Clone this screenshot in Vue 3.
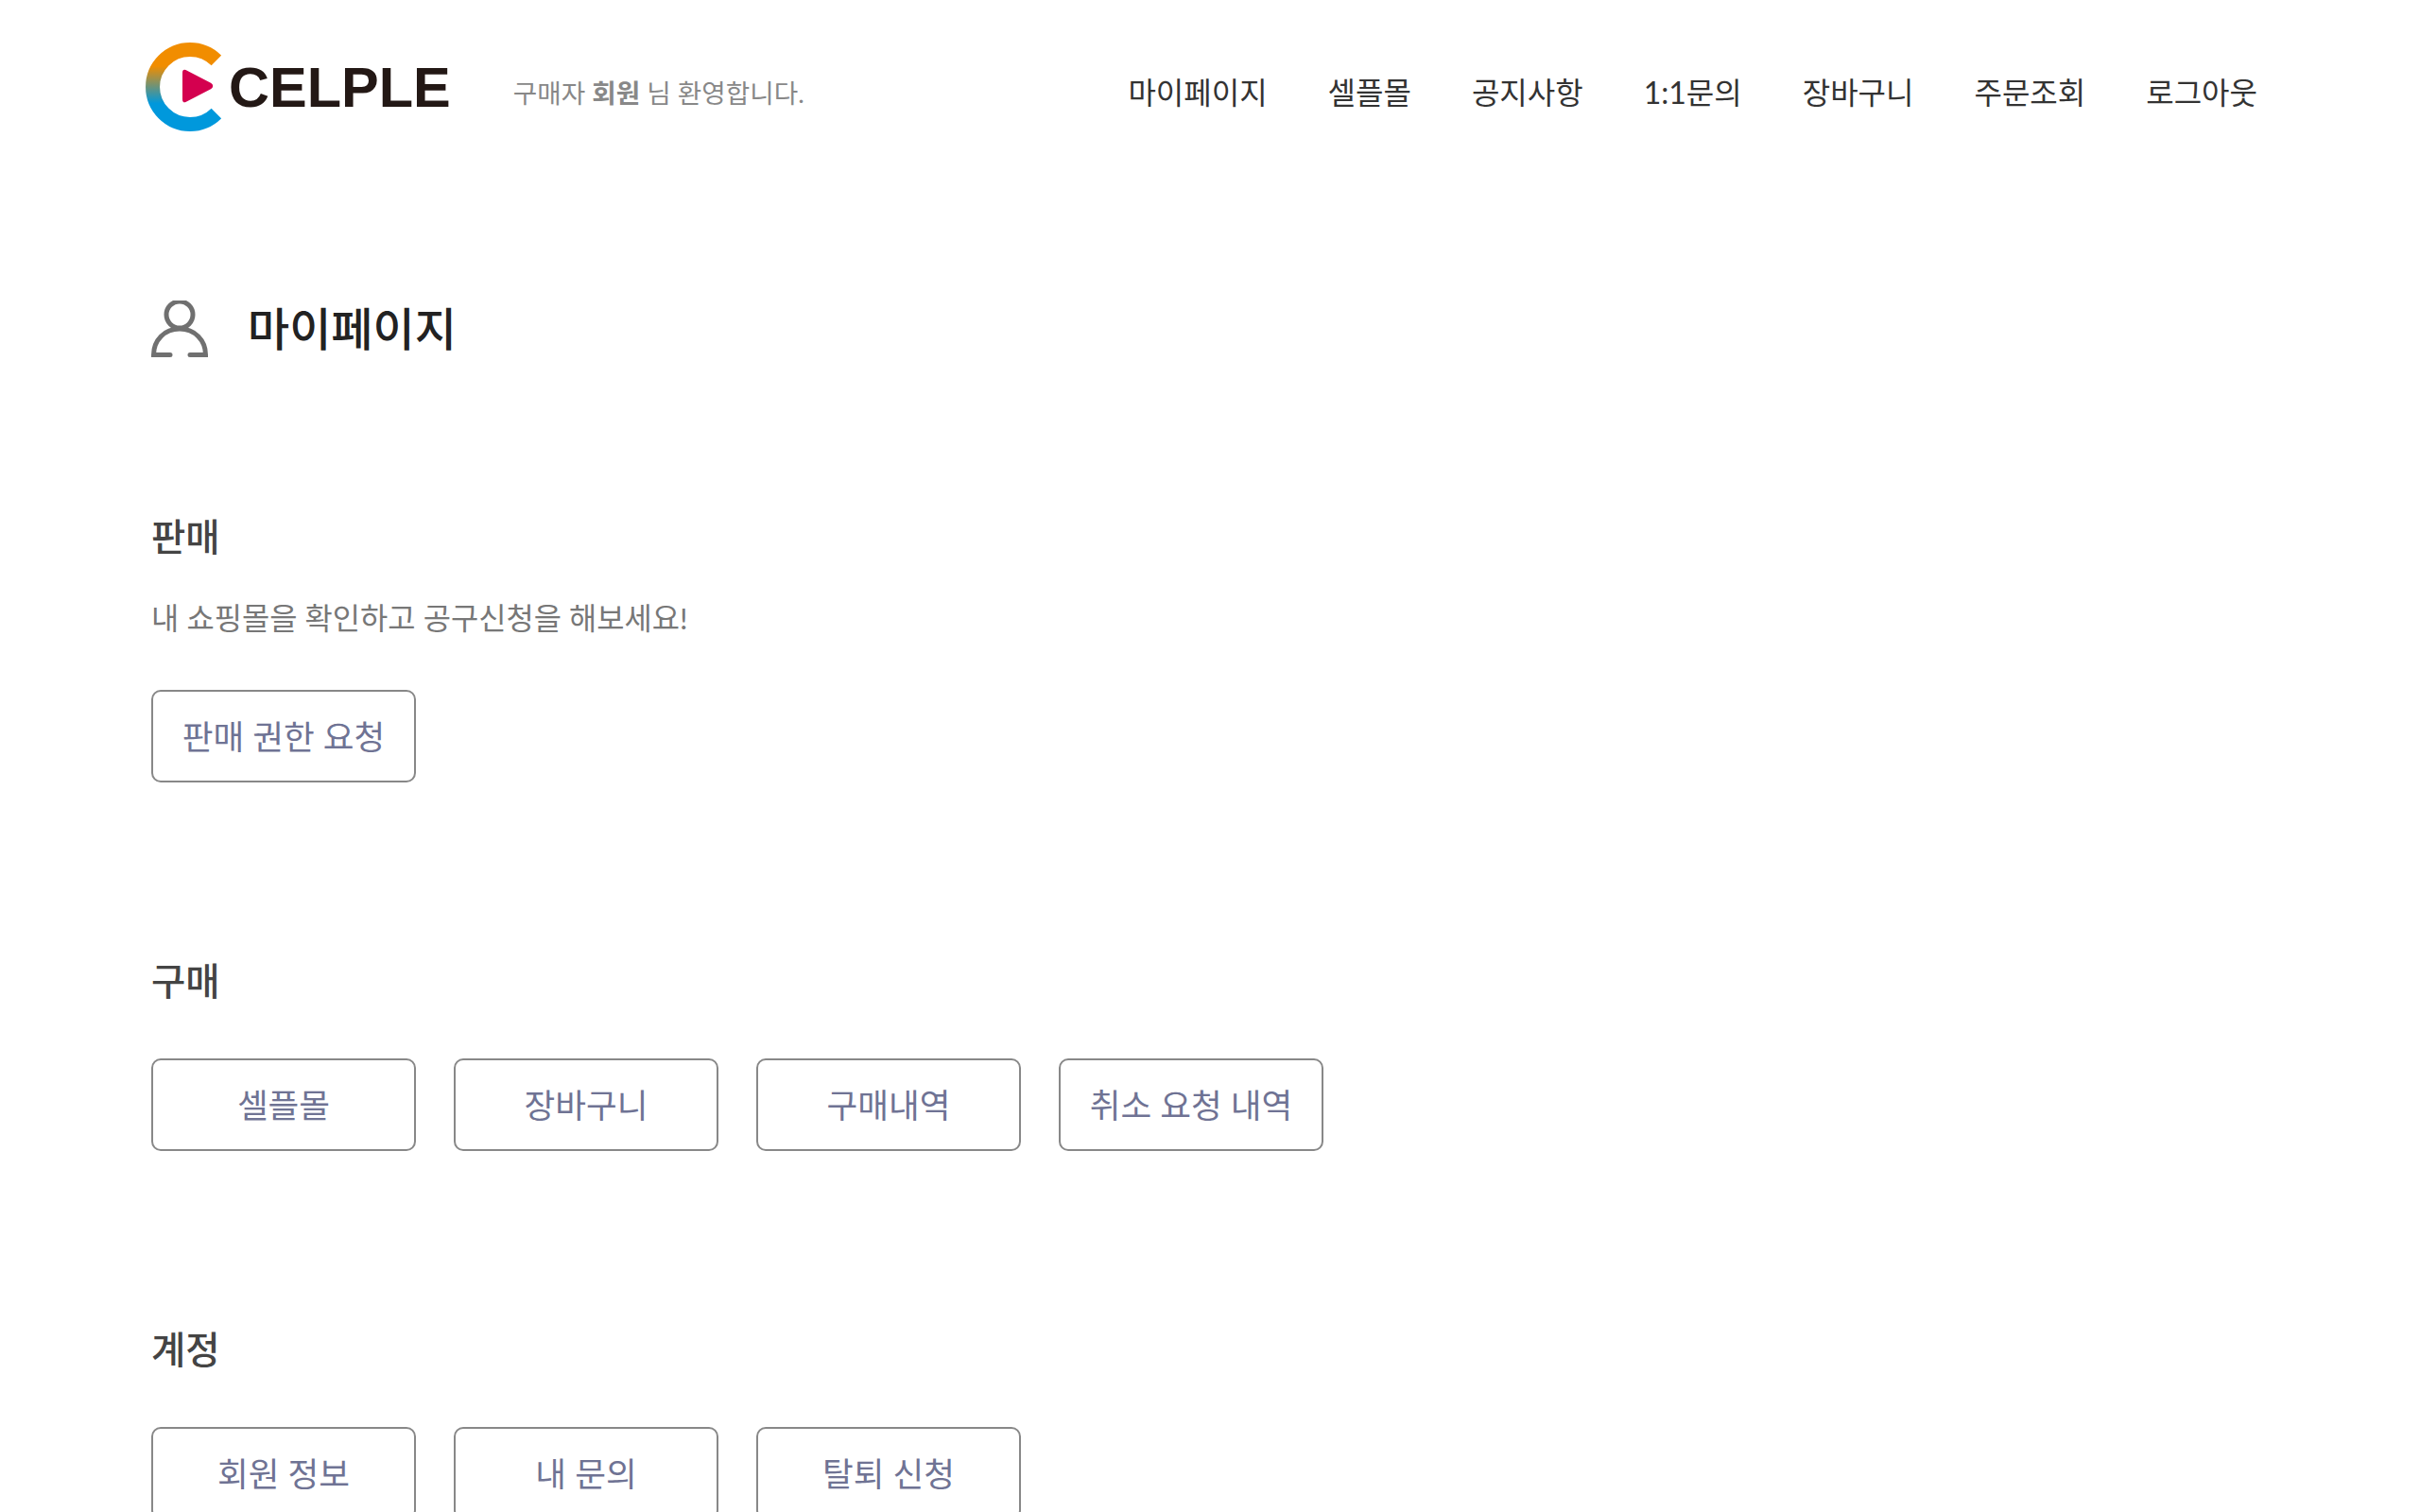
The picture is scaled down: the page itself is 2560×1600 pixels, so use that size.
<template>
  <div class="page">
    <header class="header">
      <a class="logo" href="#">
        <svg class="logo-mark" viewBox="0 0 80 94" xmlns="http://www.w3.org/2000/svg">
          <defs>
            <linearGradient id="ring" x1="0" y1="0" x2="0" y2="1">
              <stop offset="0.22" stop-color="#f18d00" />
              <stop offset="0.72" stop-color="#0098dc" />
            </linearGradient>
          </defs>
          <path d="M74.900 19 A39.500 39.500 0 1 0 74.900 75" fill="none" stroke="url(#ring)" stroke-width="15" />
          <path d="M42 30 L69 44 Q71.500 46 69 48 L42 62 Q40 63 40 60 L40 32 Q40 29 42 30 Z" fill="#d4004f" stroke="#d4004f" stroke-width="2" stroke-linejoin="round" />
        </svg>
        <span class="logo-text">CELPLE</span>
      </a>
      <p class="welcome">구매자 <b>회원</b> 님 환영합니다.</p>
      <nav class="nav">
        <a v-for="item in navItems" :key="item" href="#">{{ item }}</a>
      </nav>
    </header>

    <main class="content">
      <div class="page-title">
        <svg class="user-icon" viewBox="0 0 60 60" fill="none" xmlns="http://www.w3.org/2000/svg">
          <circle cx="30" cy="15" r="14" stroke="#707070" stroke-width="5" />
          <path d="M20 57.500 H2.500 C2.500 42 14 30 30 30 C46 30 57.500 42 57.500 57.500 H41" stroke="#707070" stroke-width="5" stroke-linecap="round" />
        </svg>
        <h1>마이페이지</h1>
      </div>

      <section v-for="group in groups" :key="group.title" class="group">
        <h2>{{ group.title }}</h2>
        <p v-if="group.desc" class="desc">{{ group.desc }}</p>
        <div class="buttons">
          <button v-for="label in group.buttons" :key="label" type="button">{{ label }}</button>
        </div>
      </section>
    </main>
  </div>
</template>

<script setup>
const navItems = ['마이페이지', '셀플몰', '공지사항', '1:1문의', '장바구니', '주문조회', '로그아웃']

const groups = [
  {
    title: '판매',
    desc: '내 쇼핑몰을 확인하고 공구신청을 해보세요!',
    buttons: ['판매 권한 요청']
  },
  {
    title: '구매',
    buttons: ['셀플몰', '장바구니', '구매내역', '취소 요청 내역']
  },
  {
    title: '계정',
    buttons: ['회원 정보', '내 문의', '탈퇴 신청']
  }
]
</script>

<style>
html,
body {
  overflow: hidden;
  background: #fff;
}
</style>

<style scoped>
.page {
  font-family: Lato, "Noto Sans CJK KR", sans-serif;
  width: 2560px;
  height: 1600px;
  overflow: hidden;
}

.header {
  display: flex;
  align-items: center;
  height: 194px;
  padding: 0 172px 0 154px;
  box-sizing: border-box;
}

.logo {
  display: flex;
  align-items: center;
  gap: 8px;
  margin-bottom: 10px;
  text-decoration: none;
}

.logo-mark {
  width: 80px;
  height: 94px;
}

.logo-text {
  font-family: "Liberation Sans", Arial, sans-serif;
  font-weight: 700;
  font-size: 59.500px;
  color: #231815;
}

.welcome {
  margin: 0 0 0 66px;
  font-size: 27.700px;
  color: #888;
}

.welcome b {
  font-weight: 700;
}

.nav {
  display: flex;
  gap: 64px;
  margin-left: auto;
  margin-bottom: 3px;
}

.nav a {
  font-size: 32px;
  color: #333;
  text-decoration: none;
}

.content {
  padding: 0 160px;
}

.page-title {
  display: flex;
  align-items: center;
  gap: 42px;
  margin-top: 124px;
  height: 60px;
}

.user-icon {
  width: 60px;
  height: 60px;
}

h1 {
  margin: 0 0 6px;
  font-size: 48px;
  font-weight: 500;
  color: #222;
}

.group {
  margin-bottom: 180px;
}

.page-title + .group {
  margin-top: 160px;
}

h2 {
  margin: 0;
  font-size: 39.500px;
  line-height: 60px;
  font-weight: 500;
  color: #444;
}

.desc {
  margin: 30px 0 0;
  font-size: 31.800px;
  line-height: 52px;
  color: #777;
}

.buttons {
  display: flex;
  gap: 40px;
  margin-top: 52px;
}

.desc + .buttons {
  margin-top: 50px;
}

button {
  width: 280px;
  height: 98px;
  padding: 0 0 4px;
  background: #fff;
  border: 2px solid #888;
  border-radius: 10px;
  font-family: inherit;
  font-size: 35.600px;
  color: #6f7394;
}
</style>
